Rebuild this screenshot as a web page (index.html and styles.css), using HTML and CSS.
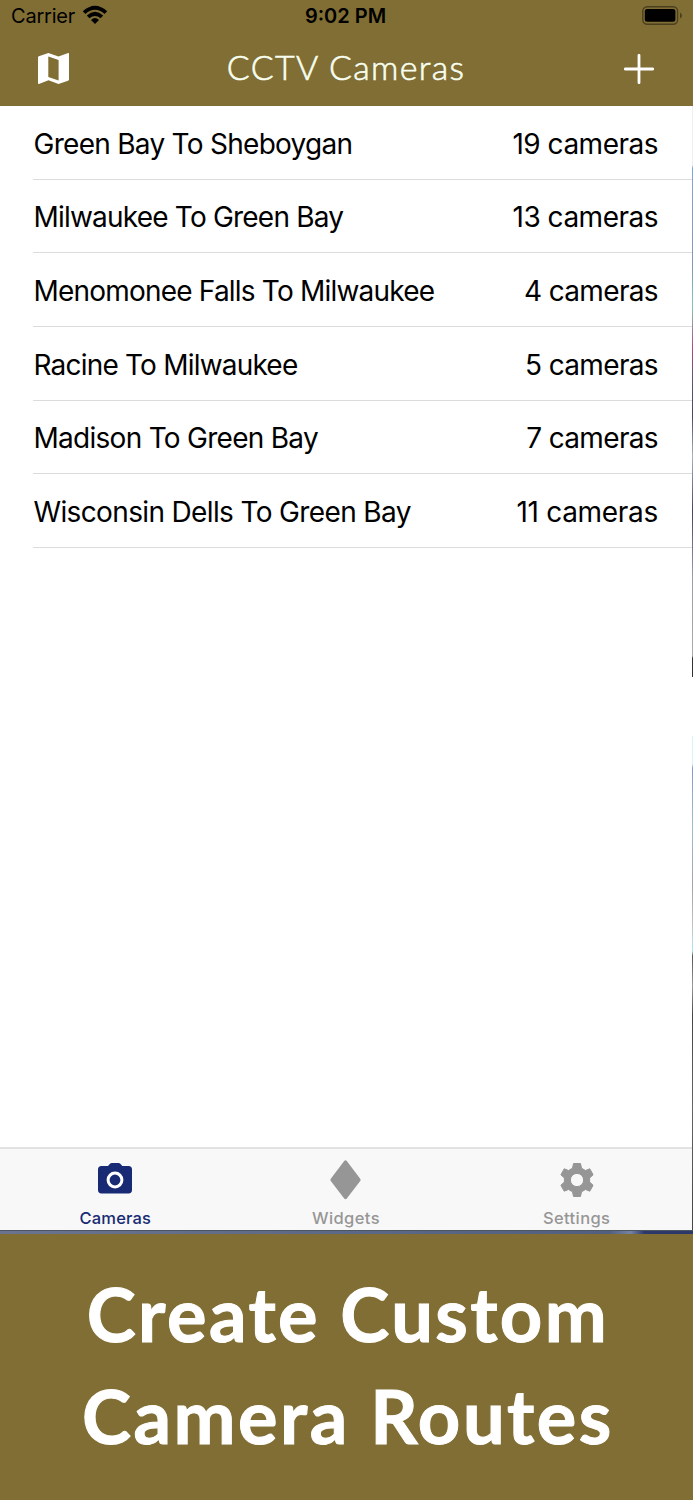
FILE: index.html
```html
<!DOCTYPE html>
<html lang="en">
<head>
<meta charset="utf-8">
<title>CCTV Cameras</title>
<link rel="stylesheet" href="styles.css">
</head>
<body>
<div class="phone">
  <header class="header">
    <div class="status">
      <div class="carrier"><span>Carrier</span>
        <svg class="wifi" width="26" height="20" viewBox="0 0 26 20"><path d="M.8 6.3Q13-4.7 25.2 6.3L22.6 9Q13 .6 3.4 9ZM4.8 10.5Q13 3.1 21.2 10.5L18.6 13.2Q13 8.6 7.4 13.2ZM9 15Q13 11.2 17 15L13 19Z"/></svg>
      </div>
      <time class="clock">9:02 PM</time>
      <svg class="battery" width="41" height="20" viewBox="0 0 41 20"><rect x=".8" y=".8" width="34.8" height="17.4" rx="4.5" fill="none" stroke="#4b401e" stroke-width="1.4"/><rect x="2.8" y="3" width="30.6" height="12.8" rx="2.3"/><path d="M38 6.4Q40 7.6 40 9.5T38 12.6Z" fill="#4b401e"/></svg>
    </div>
    <nav class="navbar">
      <svg class="map" width="31" height="31" viewBox="0 0 31 31"><path fill="#fff" fill-rule="evenodd" d="M30.2.1 20.5 3.5 10.4.1.8 3.2Q0 3.5 0 4.3V30.3Q0 31 .9 30.9L10.5 27.2 20.5 30.9 30 27.7Q31 27.3 31 26.5V.8Q31 0 30.2.1ZM10.3 3.6 20.6 7.1V27.5L10.3 24Z"/></svg>
      <h1 class="title">CCTV Cameras</h1>
      <svg class="plus" width="30" height="30" viewBox="0 0 30 30"><path d="M15 1.3V28.7M1.3 15H28.7" stroke="#fff" stroke-width="2.8" stroke-linecap="round"/></svg>
    </nav>
  </header>
  <div class="screen">
    <main class="main">
      <ul class="routes">
        <li class="route"><span class="name tight">Green Bay To Sheboygan</span><span class="count">19 cameras</span></li>
        <li class="route"><span class="name tighter">Milwaukee To Green Bay</span><span class="count">13 cameras</span></li>
        <li class="route"><span class="name tighter">Menomonee Falls To Milwaukee</span><span class="count short">4 cameras</span></li>
        <li class="route"><span class="name tighter">Racine To Milwaukee</span><span class="count short">5 cameras</span></li>
        <li class="route"><span class="name tight">Madison To Green Bay</span><span class="count short">7 cameras</span></li>
        <li class="route"><span class="name">Wisconsin Dells To Green Bay</span><span class="count wide">11 cameras</span></li>
      </ul>
      <nav class="tabs">
        <a class="tab active"><svg width="34" height="40" viewBox="0 0 34 40"><path fill="#172a73" d="M10 6 12 3.8Q12.7 3 13.8 3H20.5Q21.6 3 22.3 3.8L24.3 6H30.5Q34 6 34 9.5V30Q34 33.4 30.5 33.4H3.5Q0 33.4 0 30V9.5Q0 6 3.5 6Z"/><circle cx="17" cy="20" r="6.9" fill="none" stroke="#fff" stroke-width="3"/></svg><span>Cameras</span></a>
        <a class="tab"><svg width="31" height="40" viewBox="0 0 31 40"><path fill="#969696" d="M14.2.9Q15.5-.4 16.8.9L30.2 18.7Q31 20 30.2 21.1L16.8 38.6Q15.5 40 14.2 38.6L.8 21.1Q0 20 .8 18.7Z"/></svg><span>Widgets</span></a>
        <a class="tab"><svg width="34" height="40" viewBox="0 0 34 40"><path fill="#969696" stroke="#969696" stroke-linejoin="round" fill-rule="evenodd" d="M13.5 3.5H20.5L21.5 8.2 25.5 10.5 29.8 8.8 33.1 14.8 29.6 18V22L33.1 25.2 29.8 31.2 25.5 29.5 21.5 31.8 20.5 36.5H13.5L12.5 31.8 8.5 29.5 4.2 31.2 .9 25.2 4.4 22V18L.9 14.8 4.2 8.8 8.5 10.5 12.5 8.2ZM17 13.4A6.6 6.6 0 1 0 17 26.6 6.6 6.6 0 1 0 17 13.4Z"/></svg><span>Settings</span></a>
      </nav>
    </main>
    <div class="photo-edge"></div>
  </div>
  <div class="photo-bottom"></div>
  <footer class="promo"><span class="line1">Create Custom</span><span class="line2">Camera Routes</span></footer>
</div>
</body>
</html>
```
FILE: styles.css
```css
* { box-sizing: border-box; }
body { margin: 0; background: #fff; color: #000; font-family: Inter, "Liberation Sans", sans-serif; }
.phone { width: 693px; height: 1500px; display: flex; flex-direction: column; overflow: hidden; }
.header { height: 106px; background: #806e34; flex: none; }
.status { height: 32px; display: grid; grid-template-columns: 1fr auto 1fr; align-items: center; padding: 0 10px 0 11px; }
.carrier { display: flex; align-items: center; gap: 7px; font-size: 20px; letter-spacing: -.2px; }
.wifi { margin-bottom: 3px; }
.clock { font-size: 20px; font-weight: 600; letter-spacing: 0; padding-right: 3px; }
.battery { justify-self: end; margin-bottom: 1px; }
.navbar { height: 74px; display: grid; grid-template-columns: 1fr auto 1fr; align-items: center; padding: 0 39px 0 38px; }
.title { margin: 0; font: 300 34px/40px Lato, sans-serif; letter-spacing: 1.3px; color: #f8fff0; padding-bottom: 5px; -webkit-text-stroke: .6px #f8fff0; }
.map { margin-top: -1px; }
.plus { justify-self: end; }
.screen { height: 1124px; display: flex; flex: none; }
.main { width: 692px; display: flex; flex-direction: column; justify-content: space-between; }
.routes { list-style: none; margin: 0; padding: 0 0 0 33px; }
.route { height: 73.67px; display: flex; justify-content: space-between; align-items: center; border-bottom: 1px solid #dcdcdd; padding: 3px 34px 0 .5px; font-size: 28px; white-space: nowrap; }
.name { letter-spacing: -.64px; }
.tight { letter-spacing: -.72px; }
.tighter { letter-spacing: -.8px; }
.count { letter-spacing: -.5px; }
.short { letter-spacing: -.65px; }
.wide { letter-spacing: -.3px; }
.tabs { height: 83px; display: grid; grid-template-columns: repeat(3, 1fr); border-top: 2px solid #e2e2e2; background: #f8f8f8; }
.tab { display: flex; flex-direction: column; align-items: center; padding-top: 11px; font-size: 16.5px; line-height: 20px; font-weight: 500; letter-spacing: .4px; color: #969696; gap: 8px; }
.active { color: #172a73; letter-spacing: .2px; }
.photo-edge { width: 1px; background: linear-gradient(#eeeef1 0 59px, #83a6d5 62px, #8297b7 160px, #7bcdb5 200px, #b54683 242px, #65576e 270px, #484a5b 310px, #a7b2bb 350px, #45446a 405px, #9a9da8 470px, #aaa 550px, #323232 552px 571px, #fff 571px 630px, #d7f5f5 630px 658px, #8599ce 662px, #9bc1ca 720px, #a3a3ab 780px, #c2c2c2 820px, #aeeaf2 845px, #555 850px, #999 880px, #45454a 910px, #666 1000px, #444 1124px); }
.photo-bottom { height: 4px; flex: none; background: linear-gradient(90deg, #6a7491, #525f80 88%, #7783a1 91%, #2c376a 93%); border-top: 1px solid #4c5660; }
.promo { flex: 1; background: #806e34; color: #fff; display: flex; flex-direction: column; align-items: center; padding: 29px 0 0 3px; font: 700 74px/102px Lato, sans-serif; white-space: nowrap; -webkit-text-stroke: 1px #fff; }
.line1 { letter-spacing: 2.4px; }
.line2 { letter-spacing: 2.5px; }
```
